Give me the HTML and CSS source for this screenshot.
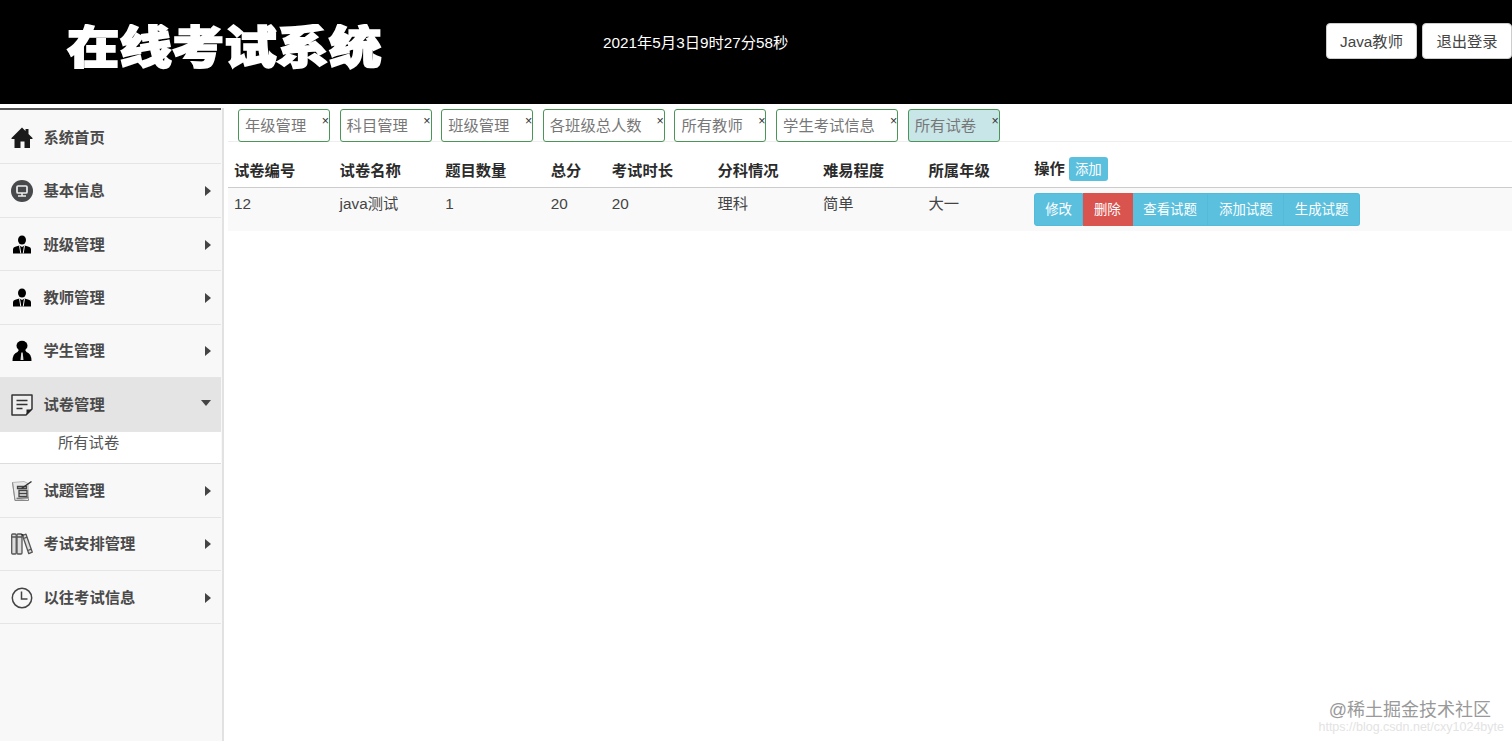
FILE: index.html
```html
<!DOCTYPE html>
<html lang="zh-CN">
<head>
    <meta charset="UTF-8">
    <title>在线考试系统</title>
    <link rel="stylesheet" href="styles.css">
</head>
<body>
    <header class="header">
        <h1 class="logo">在线考试系统</h1>
        <div class="clock">2021年5月3日9时27分58秒</div>
        <div class="user-btns">
            <button class="btn-default btn-user">Java教师</button>
            <button class="btn-default">退出登录</button>
        </div>
    </header>

    <div class="container">
        <aside class="sidebar">
            <ul class="menu">
                <li class="menu-item">
                    <svg class="icon" viewBox="0 0 22 22"><path fill="#1a1a1a" d="M11 .5 14.5 4V2h3v5L21.5 11v1H19v9h-5.5v-6.5h-4V21H3.500v-9H.5v-1z"/></svg>
                    <span>系统首页</span>
                </li>
                <li class="menu-item">
                    <svg class="icon" viewBox="0 0 22 22"><circle cx="11" cy="11" r="11" fill="#48494b"/><rect x="6" y="6" width="10" height="7" rx="1" fill="none" stroke="#eee" stroke-width="1.700"/><path d="M11 13v2.500M7 16h8" stroke="#eee" stroke-width="1.500"/></svg>
                    <span>基本信息</span><i class="arrow"></i>
                </li>
                <li class="menu-item">
                    <svg class="icon" viewBox="0 0 22 22"><ellipse cx="11" cy="6" rx="4" ry="4.600"/><path d="M2 19.500v-4q0-2.500 3-3l3.500-1 2.500 1.500 2.500-1.500 3.500 1q3 .5 3 3v4z"/><path d="M8.500 11.500 9.800 19.500M13.500 11.500 12.200 19.500" stroke="#f8f8f8" stroke-width="1"/></svg>
                    <span>班级管理</span><i class="arrow"></i>
                </li>
                <li class="menu-item">
                    <svg class="icon" viewBox="0 0 22 22"><ellipse cx="11" cy="6" rx="4" ry="4.600"/><path d="M2 19.500v-4q0-2.500 3-3l3.500-1 2.500 1.500 2.500-1.500 3.500 1q3 .5 3 3v4z"/><path d="M8.500 11.500 9.800 19.500M13.500 11.500 12.200 19.500" stroke="#f8f8f8" stroke-width="1"/></svg>
                    <span>教师管理</span><i class="arrow"></i>
                </li>
                <li class="menu-item">
                    <svg class="icon" viewBox="0 0 22 22"><ellipse cx="11" cy="5.800" rx="5.500" ry="5"/><path d="M1.500 21q0-7.500 5-9l2-3h5l2 3q5 1.500 5 9z"/><path d="m10.300 12.500-.8 7.500h3l-.8-7.500z" fill="#ddd"/></svg>
                    <span>学生管理</span><i class="arrow"></i>
                </li>
                <li class="menu-item active">
                    <svg class="icon" viewBox="0 0 22 22"><path d="M1 1h20v14l-6 6H1z" fill="#eee" stroke="#333" stroke-width="1.500" stroke-linejoin="round"/><path d="M21 15.500h-5.500V21z" fill="#222"/><path d="M5.500 6.500h11M5.500 10.500h11M5.500 14.500h6" stroke="#333" stroke-width="1.300"/></svg>
                    <span>试卷管理</span><i class="arrow down"></i>
                </li>
                <li class="submenu">所有试卷</li>
                <li class="menu-item">
                    <svg class="icon" viewBox="0 0 22 22"><path d="M1.500 2.500 13 1.500l4 2 .5 15L4 20.500z" fill="#e9e9e9" stroke="#aaa" stroke-width=".8"/><path d="M1.500 2.500 4 20.500h13.500v-2" fill="none" stroke="#888"/><path d="M6.500 6.500h9v2h-9zM8 10.500h8v6H8zM8 13.500h8" fill="none" stroke="#444" stroke-width="1.300"/><path d="M10.500 8.500 20.500 1.500" stroke="#333" stroke-width="1.500"/><path d="m5.500 18.500 12-1" stroke="#777" stroke-width="1.500"/></svg>
                    <span>试题管理</span><i class="arrow"></i>
                </li>
                <li class="menu-item">
                    <svg class="icon" viewBox="0 0 22 22"><g fill="#ddd" stroke="#555" stroke-width="1.300"><rect x=".7" y="1" width="4.500" height="20" rx="1"/><rect x="6" y="1" width="5" height="20" rx="1"/><path d="m11.500 2.500 3.500-1.300 6.300 18-3.500 1.500z" stroke-linejoin="round"/><path d="M.6 4h4.500M6 4h5M12.500 5.500 16 4.200M16.800 17.500l3.500-1.300" fill="none"/></g><path d="M9.500 1h3v3z" fill="#333"/></svg>
                    <span>考试安排管理</span><i class="arrow"></i>
                </li>
                <li class="menu-item">
                    <svg class="icon" viewBox="0 0 22 22"><circle cx="11" cy="11" r="9.700" fill="none" stroke="#444" stroke-width="1.500"/><path d="M10.500 4.500v7.500h6" fill="none" stroke="#444" stroke-width="1.500"/></svg>
                    <span>以往考试信息</span><i class="arrow"></i>
                </li>
            </ul>
        </aside>

        <main class="content">
            <nav class="tabs">
                <div class="tab">年级管理<span class="close">×</span></div>
                <div class="tab">科目管理<span class="close">×</span></div>
                <div class="tab">班级管理<span class="close">×</span></div>
                <div class="tab">各班级总人数<span class="close">×</span></div>
                <div class="tab">所有教师<span class="close">×</span></div>
                <div class="tab">学生考试信息<span class="close">×</span></div>
                <div class="tab current">所有试卷<span class="close">×</span></div>
            </nav>

            <table class="table">
                <colgroup>
                    <col class="col"><col class="col"><col class="col"><col class="col-small">
                    <col class="col"><col class="col"><col class="col"><col class="col"><col>
                </colgroup>
                <thead>
                    <tr>
                        <th>试卷编号</th>
                        <th>试卷名称</th>
                        <th>题目数量</th>
                        <th>总分</th>
                        <th>考试时长</th>
                        <th>分科情况</th>
                        <th>难易程度</th>
                        <th>所属年级</th>
                        <th><div class="action-head">操作<button class="btn-add">添加</button></div></th>
                    </tr>
                </thead>
                <tbody>
                    <tr>
                        <td>12</td>
                        <td>java测试</td>
                        <td>1</td>
                        <td>20</td>
                        <td>20</td>
                        <td>理科</td>
                        <td>简单</td>
                        <td>大一</td>
                        <td>
                            <div class="btn-group">
                                <button class="btn-info">修改</button>
                                <button class="btn-info btn-danger">删除</button>
                                <button class="btn-info">查看试题</button>
                                <button class="btn-info">添加试题</button>
                                <button class="btn-info">生成试题</button>
                            </div>
                        </td>
                    </tr>
                </tbody>
            </table>
        </main>
    </div>

    <div class="watermark">@稀土掘金技术社区</div>
    <div class="watermark-url">https://blog.csdn.net/cxy1024byte</div>
</body>
</html>
```
FILE: styles.css
```css
* {
    margin: 0;
    padding: 0;
    box-sizing: border-box;
}

body {
    height: 741px;
    overflow: hidden;
    font-family: "Liberation Sans", "Noto Sans CJK SC", sans-serif;
    font-size: 15.3px;
    line-height: 22px;
    color: #444;
    background-color: #fff;
}

button {
    font-family: inherit;
    white-space: nowrap;
}

/* 顶部 */
.header {
    display: flex;
    align-items: flex-start;
    height: 104px;
    padding-left: 67px;
    background-color: #000;
    color: #fff;
}

.logo {
    width: 536px;
    margin-top: 18px;
    font-size: 52.4px;
    font-weight: 900;
    line-height: 62px;
    -webkit-text-stroke: 2px #fff;
    transform: scaleY(0.86);
}

.clock {
    flex: 1;
    padding-top: 32px;
    font-size: 15.3px;
}

.user-btns {
    display: flex;
    gap: 5px;
    padding-top: 23px;
}

.btn-default {
    width: 90px;
    height: 36px;
    padding-bottom: 2px;
    border: 1px solid #ccc;
    border-radius: 4px;
    background-color: #fff;
    font-size: 15.3px;
    color: #444;
}

.btn-user {
    width: 91px;
}

/* 左侧菜单 */
.container {
    display: flex;
    height: 637px;
}

.sidebar {
    width: 224px;
    margin-top: 4px;
    border-right: 2px solid #e2e2e2;
    background-color: #f8f8f8;
}

.menu {
    width: 221px;
    padding-top: 1px;
    border-top: 2px solid #555;
    list-style: none;
}

.menu-item {
    display: flex;
    align-items: center;
    height: 53.45px;
    padding: 1px 10px 0 11px;
    border-bottom: 1px solid #e5e5e5;
    font-weight: bold;
    color: #4a4a4a;
}

.menu-item span {
    flex: 1;
}

.menu-item.active {
    background-color: #e4e4e4;
}

.icon {
    width: 22px;
    height: 22px;
    margin-right: 10.5px;
}

.arrow {
    border-left: 6px solid #444;
    border-top: 5px solid transparent;
    border-bottom: 5px solid transparent;
}

.arrow.down {
    margin-bottom: 4px;
    border-top: 6px solid #444;
    border-left: 5px solid transparent;
    border-right: 5px solid transparent;
    border-bottom: 0;
}

.submenu {
    height: 32.5px;
    padding-left: 58px;
    border-bottom: 1px solid #ddd;
    background-color: #fff;
    color: #555;
}

/* 标签页 */
.content {
    flex: 1;
    padding: 5px 0 0 4px;
}

.tabs {
    display: flex;
    gap: 9.6px;
    height: 33px;
    padding-left: 10px;
    border-bottom: 1px solid #eee;
}

.tab {
    display: flex;
    justify-content: space-between;
    height: 33px;
    min-width: 92px;
    padding: 5px 0 0 6px;
    border: 1px solid #4b9557;
    border-radius: 3px;
    color: #777;
}

.tab .close {
    margin: -5px 0 0 15px;
    font-size: 12.5px;
    color: #333;
}

.tab.current {
    background-color: #c8e5e8;
}

/* 表格 */
.table {
    width: 100%;
    margin-top: 11px;
    border-collapse: collapse;
    table-layout: fixed;
}

.col {
    width: 105.6px;
}

.col-small {
    width: 61px;
}

th {
    height: 34px;
    padding: 3px 6px 0;
    border-bottom: 1px solid #ccc;
    text-align: left;
    color: #2b2b2b;
}

td {
    height: 43px;
    padding: 5px 6px;
    background-color: #f9f9f9;
    vertical-align: top;
}

.action-head {
    display: flex;
    align-items: center;
    gap: 4px;
    margin-top: -4px;
}

.btn-add {
    width: 39px;
    height: 24px;
    padding-bottom: 2px;
    border: none;
    border-radius: 3px;
    background-color: #5bc0de;
    font-size: 13.4px;
    color: #fff;
}

.btn-group {
    display: flex;
}

.btn-info {
    height: 33px;
    padding: 0 10.6px 3px;
    border: 1px solid #50bbda;
    border-left-width: 0;
    background-color: #5bc0de;
    font-size: 13.4px;
    color: #fff;
}

.btn-info:first-child {
    padding: 0 10px 3px;
    border-radius: 3px 0 0 3px;
    border-left-width: 1px;
}

.btn-info:last-child {
    border-radius: 0 3px 3px 0;
}

.btn-danger {
    padding: 0 11px 3px;
    background-color: #d9534f;
    border-color: #d9534f;
}

/* 水印 */
.watermark {
    position: absolute;
    right: 21px;
    bottom: 20px;
    font-size: 18px;
    color: #999;
}

.watermark-url {
    position: absolute;
    right: 8px;
    bottom: 3px;
    font-size: 12.5px;
    color: #e3e3e3;
}
```
